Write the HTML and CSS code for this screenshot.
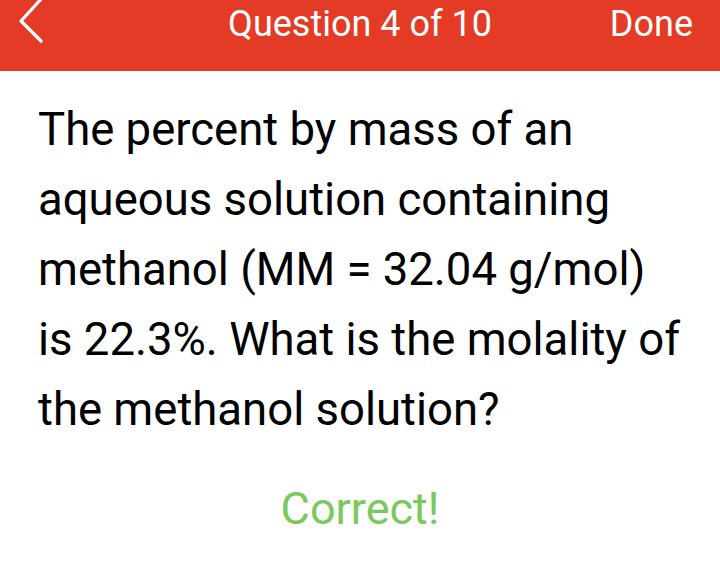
FILE: index.html
```html
<!DOCTYPE html>
<html>
<head>
<meta charset="utf-8">
<link rel="stylesheet" href="styles.css">
</head>
<body>
<header class="bar">
  <div class="back">
    <svg width="40" height="44" viewBox="0 0 40 44"><polyline points="24,-2 3,21 23,41" fill="none" stroke="#fff" stroke-width="3.2" stroke-linecap="round" stroke-linejoin="round"/></svg>
  </div>
  <div class="title">Question 4 of 10</div>
  <div class="done">Done</div>
</header>
<main class="content">
  <p class="question">The percent by mass of an aqueous solution containing methanol (MM = 32.04 g/mol) is 22.3%. What is the molality of the methanol solution?</p>
  <p class="result">Correct!</p>
</main>
</body>
</html>
```
FILE: styles.css
```css
html, body { margin: 0; padding: 0; background: #fff; }
body { width: 720px; height: 576px; overflow: hidden; font-family: Roboto, "Noto Sans", sans-serif; }
.bar {
  height: 71px;
  background: #e33b26;
  display: grid;
  grid-template-columns: 1fr auto 1fr;
  align-items: start;
  color: #fff;
}
.back { padding-left: 18px; height: 44px; }
.back svg { display: block; }
.title { font-size: 36px; line-height: 48px; }
.done { justify-self: end; font-size: 36px; line-height: 48px; padding-right: 27px; }
.content { padding: 24px 30px 0 38px; }
.question { margin: 0; font-size: 45.5px; line-height: 70px; color: #000; }
.result { margin: 34px 0 0 -8px; text-align: center; font-size: 45px; line-height: 60px; color: #79c95d; }
```
